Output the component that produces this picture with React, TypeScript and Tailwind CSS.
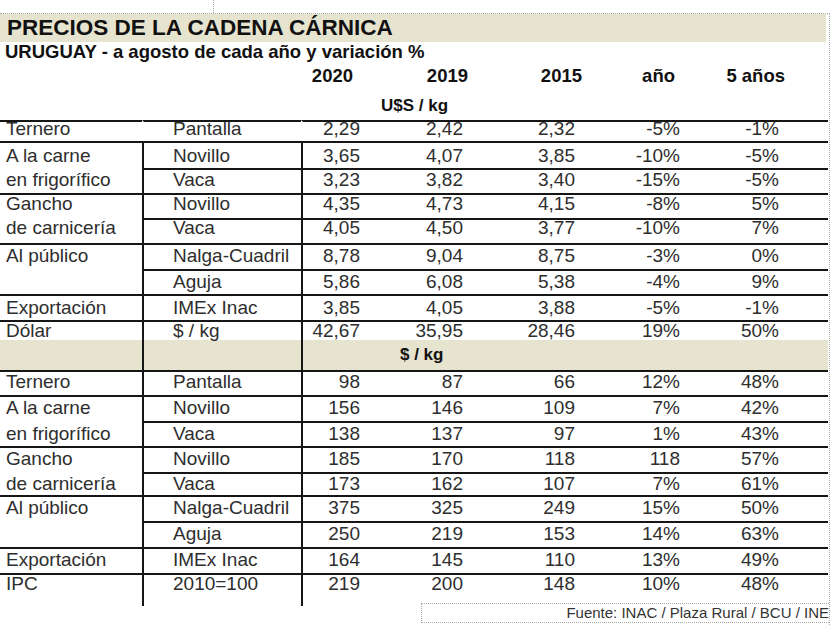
import clsx from 'clsx';

type Fila = {
  a: string;
  b: string;
  v: string[];
  h: string;
  t: string;
  full: boolean;
  vert: boolean;
};

const dolares: Fila[] = [
  { a: 'Ternero', b: 'Pantalla', v: ['2,29', '2,42', '2,32', '-5%', '-1%'], h: 'h-[21px]', t: 'leading-[13px]', full: true, vert: false },
  { a: 'A la carne', b: 'Novillo', v: ['3,65', '4,07', '3,85', '-10%', '-5%'], h: 'h-[27px]', t: 'leading-[19px] mt-[3px]', full: true, vert: true },
  { a: 'en frigorífico', b: 'Vaca', v: ['3,23', '3,82', '3,40', '-15%', '-5%'], h: 'h-[25px]', t: 'leading-[19px]', full: false, vert: true },
  { a: 'Gancho', b: 'Novillo', v: ['4,35', '4,73', '4,15', '-8%', '5%'], h: 'h-[25px]', t: 'leading-[15px] mt-[1px]', full: true, vert: true },
  { a: 'de carnicería', b: 'Vaca', v: ['4,05', '4,50', '3,77', '-10%', '7%'], h: 'h-[25px]', t: 'leading-[15px]', full: false, vert: true },
  { a: 'Al público', b: 'Nalga-Cuadril', v: ['8,78', '9,04', '8,75', '-3%', '0%'], h: 'h-[26px]', t: 'leading-[19px] mt-[1px]', full: true, vert: true },
  { a: '', b: 'Aguja', v: ['5,86', '6,08', '5,38', '-4%', '9%'], h: 'h-[25px]', t: 'leading-[19px] mt-[1px]', full: false, vert: true },
  { a: 'Exportación', b: 'IMEx Inac', v: ['3,85', '4,05', '3,88', '-5%', '-1%'], h: 'h-[26px]', t: 'leading-[19px] mt-[2px]', full: true, vert: true },
  { a: 'Dólar', b: '$ / kg', v: ['42,67', '35,95', '28,46', '19%', '50%'], h: 'h-[20px]', t: 'leading-[15px] mt-[1px]', full: true, vert: true },
];

const pesos: Fila[] = [
  { a: 'Ternero', b: 'Pantalla', v: ['98', '87', '66', '12%', '48%'], h: 'h-[25px]', t: 'leading-[19px]', full: true, vert: true },
  { a: 'A la carne', b: 'Novillo', v: ['156', '146', '109', '7%', '42%'], h: 'h-[26px]', t: 'leading-[19px] mt-[1px]', full: true, vert: true },
  { a: 'en frigorífico', b: 'Vaca', v: ['138', '137', '97', '1%', '43%'], h: 'h-[25px]', t: 'leading-[19px] mt-[1px]', full: false, vert: true },
  { a: 'Gancho', b: 'Novillo', v: ['185', '170', '118', '118', '57%'], h: 'h-[26px]', t: 'leading-[19px] mt-[1px]', full: true, vert: true },
  { a: 'de carnicería', b: 'Vaca', v: ['173', '162', '107', '7%', '61%'], h: 'h-[23px]', t: 'leading-[19px]', full: false, vert: true },
  { a: 'Al público', b: 'Nalga-Cuadril', v: ['375', '325', '249', '15%', '50%'], h: 'h-[26px]', t: 'leading-[19px] mt-[1px]', full: true, vert: true },
  { a: '', b: 'Aguja', v: ['250', '219', '153', '14%', '63%'], h: 'h-[26px]', t: 'leading-[19px] mt-[1px]', full: false, vert: true },
  { a: 'Exportación', b: 'IMEx Inac', v: ['164', '145', '110', '13%', '49%'], h: 'h-[26px]', t: 'leading-[19px] mt-[1px]', full: true, vert: true },
  { a: 'IPC', b: '2010=100', v: ['219', '200', '148', '10%', '48%'], h: 'h-[33px]', t: 'leading-[15px] mt-[1px]', full: true, vert: true },
];

// anchos de las columnas numéricas (2020 lleva el borde izquierdo)
const anchos = ['w-[62px]', 'w-[103px]', 'w-[112px]', 'w-[105px]', 'w-[99px]'];
const linea = 'border-t-[#161616]';

function FilaTabla({ r }: { r: Fila }) {
  const vline = r.vert ? 'border-l-[#161616]' : 'border-l-transparent';
  return (
    <div className={clsx('flex', r.h)}>
      <div className={clsx('w-[142px] shrink-0 border-t-2 pl-[6px]', r.full ? linea : 'border-t-transparent')}>
        <div className={clsx('whitespace-nowrap', r.t)}>{r.a}</div>
      </div>
      <div className={clsx('w-[159px] shrink-0 border-l-2 border-t-2 pl-[29px]', linea, vline)}>
        <div className={clsx('whitespace-nowrap', r.t)}>{r.b}</div>
      </div>
      {r.v.map((v, i) => (
        <div
          key={i}
          className={clsx('shrink-0 border-t-2 pr-[3px] text-right', linea, anchos[i], i === 0 && clsx('border-l-2', vline))}
        >
          <div className={clsx('whitespace-nowrap', r.t)}>{v}</div>
        </div>
      ))}
      <div className={clsx('w-[46px] shrink-0 border-t-2', linea)} />
    </div>
  );
}

export default function App() {
  return (
    <div className="h-[630px] w-[840px] overflow-hidden bg-white font-['Liberation_Sans',Arial,sans-serif] text-[#2e2e2e]">
      <div className="ml-[213px] h-[13px] border-l border-dotted border-[#a8a8a8]" />
      <div className="w-[830px] border-r border-t border-dotted border-[#a8a8a8] pb-[2px]">
        <div className="h-[28px] w-[826px] bg-[#e6e4cf] pl-[7px] text-[22.5px] font-bold leading-[28px] text-[#111]">
          PRECIOS DE LA CADENA CÁRNICA
        </div>
        <div className="h-[20px] pl-[5px] text-[18.5px] font-bold leading-[20px] text-[#111]">
          URUGUAY - a agosto de cada año y variación %
        </div>

        <div className="mt-[4px] flex h-[20px] text-[18.5px] font-bold leading-[20px] text-[#111]">
          <div className="w-[301px] shrink-0" />
          <div className="w-[52px] shrink-0 text-right">2020</div>
          <div className="w-[115px] shrink-0 text-right">2019</div>
          <div className="w-[114px] shrink-0 text-right">2015</div>
          <div className="w-[93px] shrink-0 text-right">año</div>
          <div className="w-[110px] shrink-0 text-right">5 años</div>
        </div>
        <div className="mt-[10px] h-[20px] pl-[381px] text-[17px] font-bold leading-[20px] text-[#111]">U$S / kg</div>

        <div className="mt-[4px] w-[828px] text-[19px]">
          {dolares.map((r, i) => (
            <FilaTabla key={i} r={r} />
          ))}
          <div className="flex h-[30px] bg-[#e6e4cf]">
            <div className="w-[142px] shrink-0" />
            <div className="w-[159px] shrink-0 border-l-2 border-[#161616]" />
            <div className="flex-1 border-l-2 border-[#161616] pl-[97px] pt-[5px] text-[17px] font-bold leading-[20px] text-[#111]">
              $ / kg
            </div>
          </div>
          {pesos.map((r, i) => (
            <FilaTabla key={i} r={r} />
          ))}
        </div>

        <div className="-mt-[3px] ml-[421px] h-[20px] border-b border-l border-t border-dotted border-[#a8a8a8] text-right text-[15px] leading-[18px] text-[#333]">
          Fuente: INAC / Plaza Rural / BCU / INE
        </div>
      </div>
    </div>
  );
}
